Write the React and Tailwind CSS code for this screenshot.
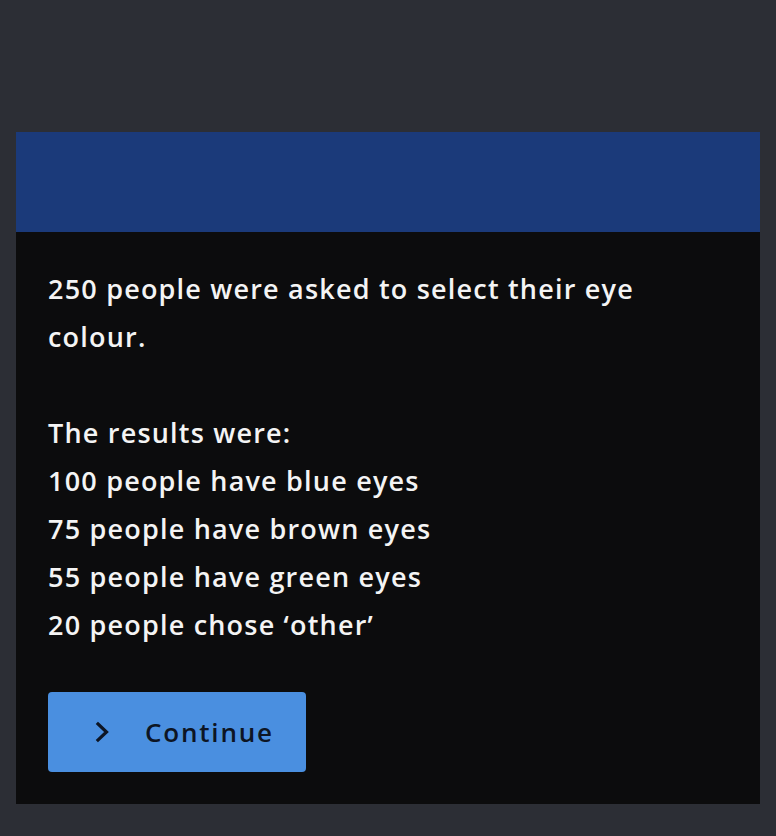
export default function App() {
  const lines = [
    'The results were:',
    '100 people have blue eyes',
    '75 people have brown eyes',
    '55 people have green eyes',
    '20 people chose \u2018other\u2019',
  ]

  return (
    <div className="min-h-[836px] bg-[#2c2e35] px-4 pt-[132px] pb-8 font-['Open_Sans',sans-serif] antialiased">
      <div className="bg-[#0c0c0d]">
        <div className="h-[100px] bg-[#1b3a7a]" />
        <div className="px-8 pt-[33px] pb-8 text-[27px] leading-[48px] font-semibold tracking-[1.2px] text-[#f4f4f4]">
          <p className="max-w-[620px]">250 people were asked to select their eye colour.</p>
          <p className="mt-12">
            {lines.map((l) => (
              <span key={l} className="block">{l}</span>
            ))}
          </p>
          <button className="mt-[43px] flex h-20 w-[258px] items-center rounded bg-[#4a8fe0] pl-[46px] text-[26px] font-semibold tracking-[1.8px] text-[#0d1524]">
            <svg width="17" height="22" viewBox="0 0 17 22" className="mr-[34px]">
              <path d="M4 3 L12.5 11 L4 19" fill="none" stroke="currentColor" strokeWidth="3.2" strokeLinecap="square" />
            </svg>
            Continue
          </button>
        </div>
      </div>
    </div>
  )
}
